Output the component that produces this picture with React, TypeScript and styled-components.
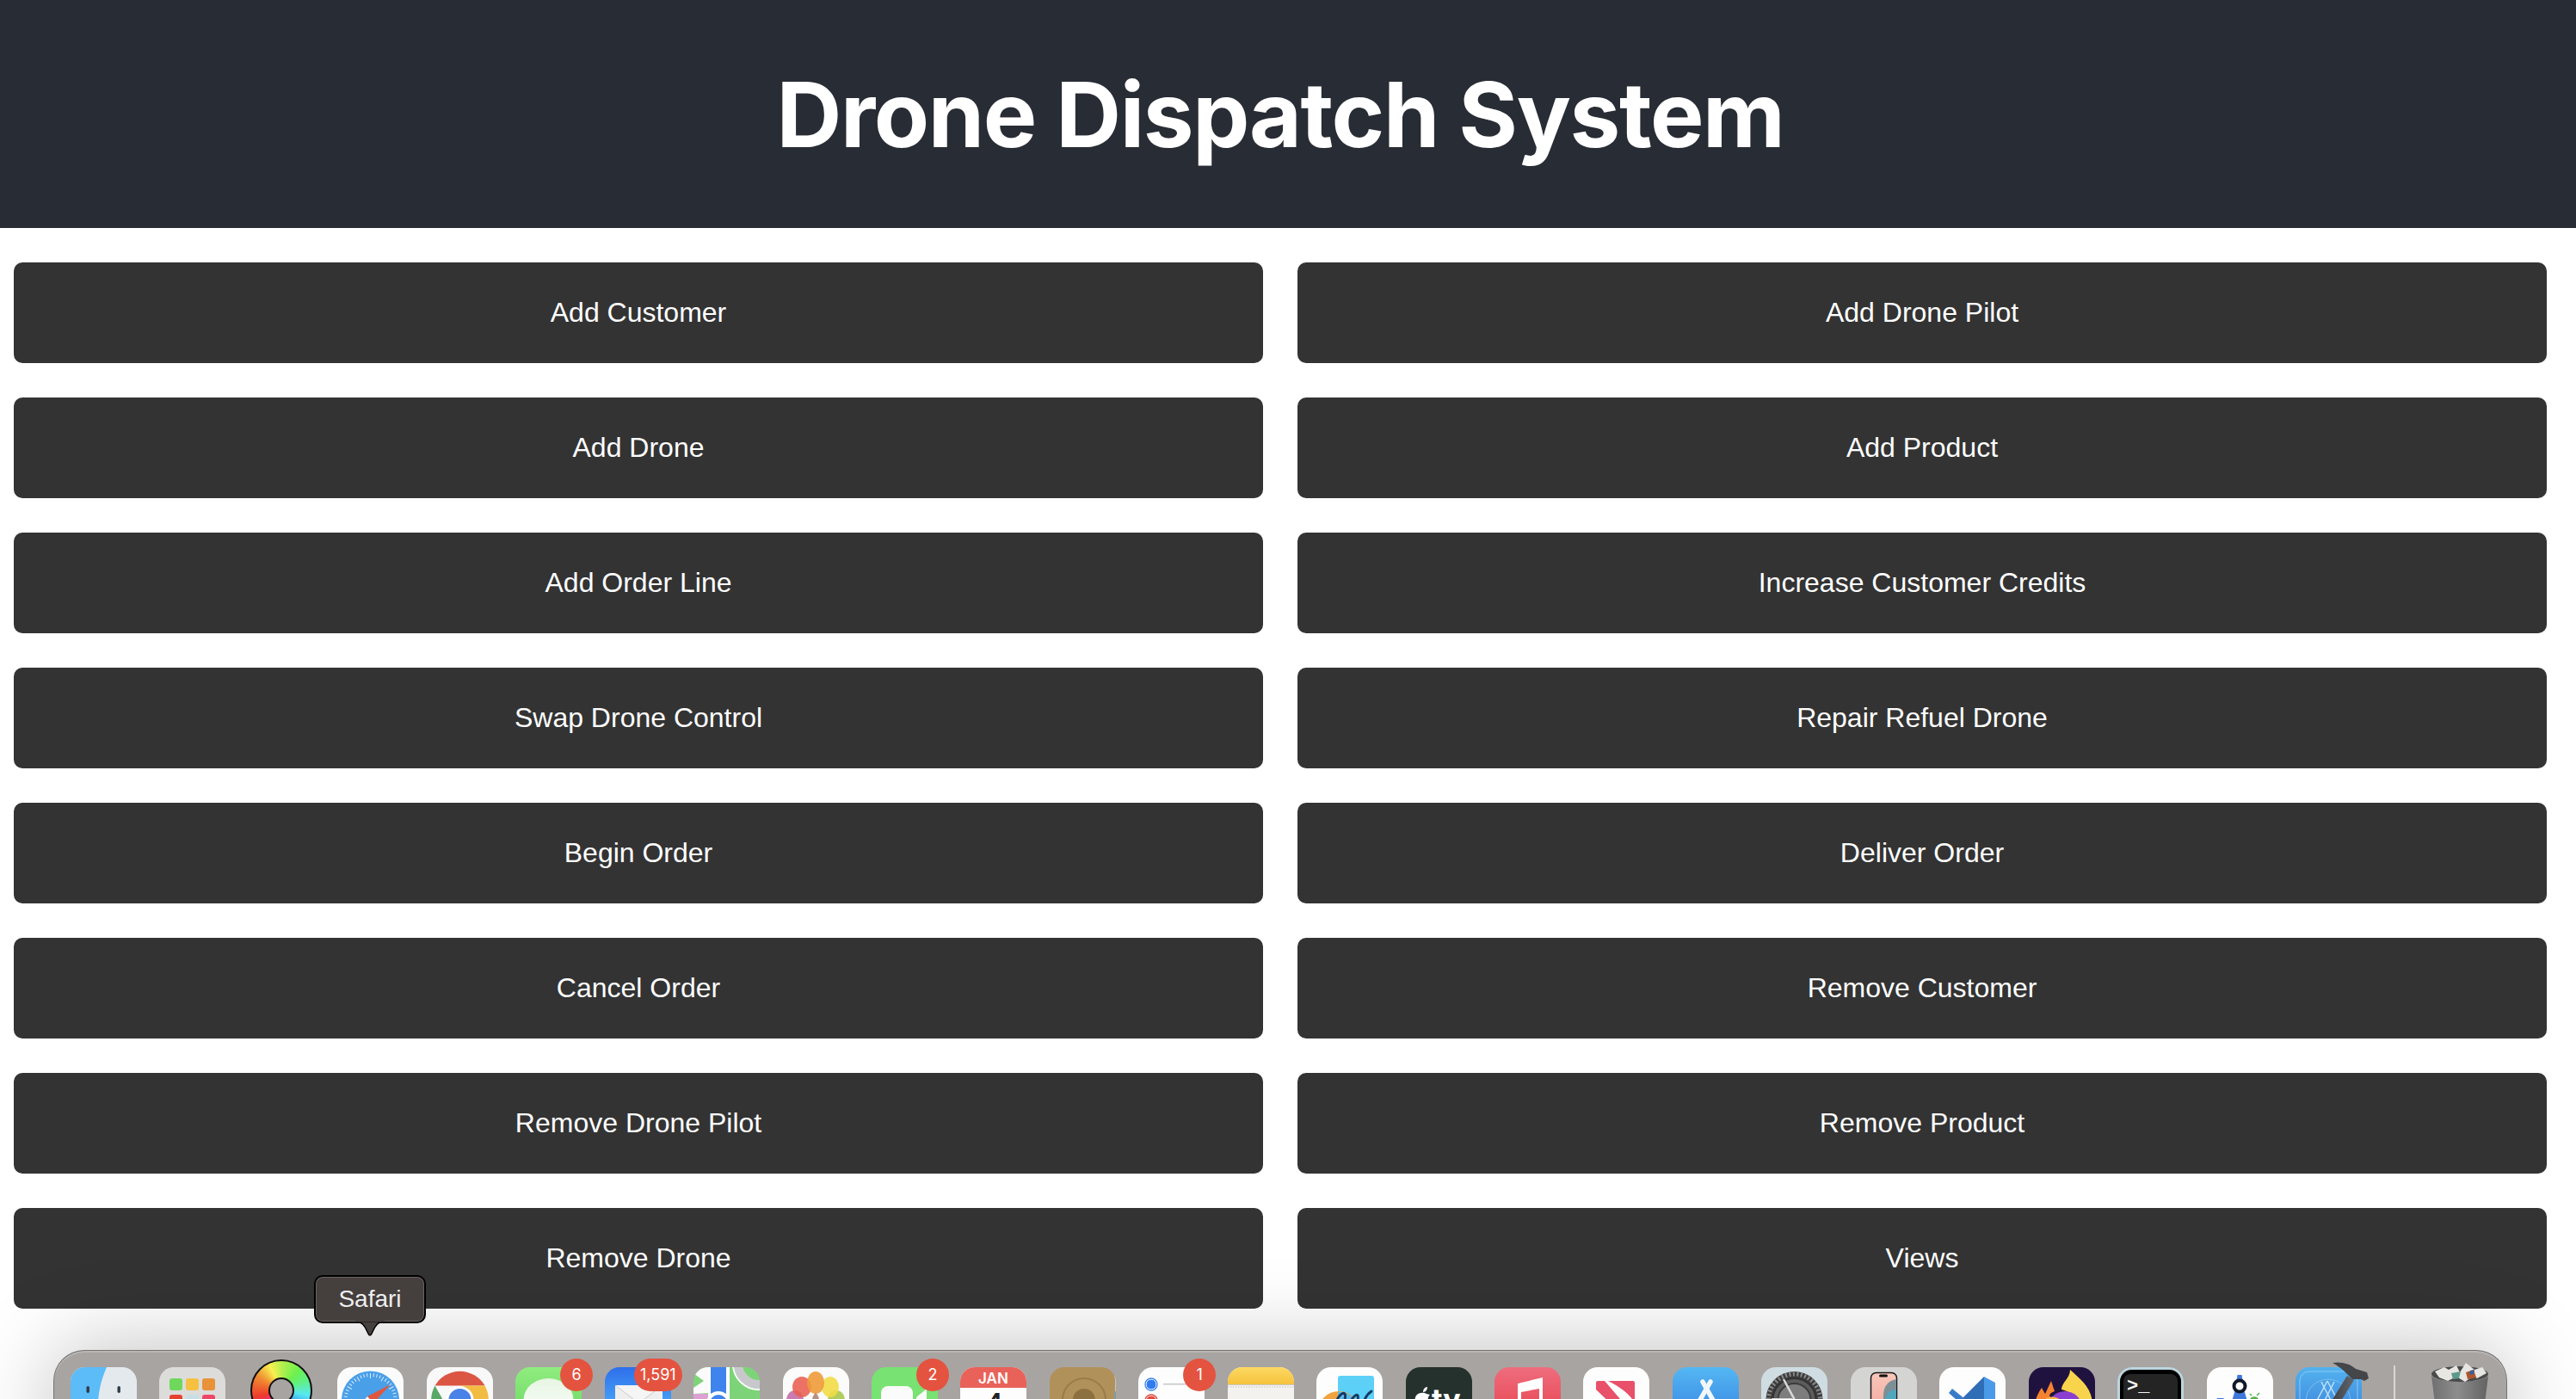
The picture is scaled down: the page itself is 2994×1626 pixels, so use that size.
import React from 'react';
import styled, { createGlobalStyle } from 'styled-components';

const GlobalStyle = createGlobalStyle`
  html, body {
    margin: 0;
    padding: 0;
    background: #fff;
    overflow: hidden;
  }
`;

const Page = styled.div`
  position: relative;
  height: 1626px;
  overflow: hidden;
  font-family: 'Liberation Sans', Arial, sans-serif;
`;

const Header = styled.header`
  height: 265px;
  padding-right: 18px;
  background-color: #282c34;
  display: flex;
  align-items: center;
  justify-content: center;
`;

const Title = styled.h1`
  margin: 0;
  color: #fff;
  font-family: Inter, 'Liberation Sans', sans-serif;
  font-size: 105px;
  font-weight: 700;
  letter-spacing: -1.4px;
`;

const ActionGrid = styled.div`
  display: grid;
  grid-template-columns: 1fr 1fr;
  gap: 40px;
  padding: 40px 34px 0 16px;
`;

const ActionButton = styled.button`
  height: 117px;
  border: none;
  border-radius: 10px;
  background-color: #333333;
  color: #fff;
  font-family: inherit;
  font-size: 32px;
  font-weight: 400;
`;

const Dock = styled.div`
  position: absolute;
  left: 62px;
  top: 1569px;
  width: 2852px;
  height: 140px;
  box-sizing: border-box;
  padding: 19px 0 0 19px;
  display: flex;
  gap: 26.44px;
  background-color: #a8a4a2;
  border: 1.5px solid #757372;
  border-bottom: none;
  border-radius: 36px;
  box-shadow: inset 0 2px 0 #b9b6b4, 0 0 100px rgba(0, 0, 0, 0.26);
`;

const Slot = styled.div`
  position: relative;
  flex: none;
  width: 77px;
  height: 77px;
`;

const Tile = styled.div`
  width: 77px;
  height: 77px;
  border-radius: 17px;
  overflow: hidden;
`;

const Glyph = styled.svg`
  display: block;
  width: 77px;
  height: 77px;
`;

const XcodeGlyph = styled.svg`
  display: block;
  width: 77px;
  height: 77px;
  overflow: visible;
`;

const TrashGlyph = styled.svg`
  display: block;
  width: 77px;
  height: 77px;
  margin-top: -3px;
  overflow: visible;
`;

const Wheel = styled.div`
  width: 72px;
  height: 72px;
  margin: -9px 0 0 2px;
  border-radius: 50%;
  box-sizing: border-box;
  border: 2px solid #111;
  display: flex;
  align-items: center;
  justify-content: center;
  background: conic-gradient(
    #b8f04e 0deg,
    #6cf04e 40deg,
    #60f08a 70deg,
    #58e8f0 100deg,
    #2f86f0 140deg,
    #8a3af0 190deg,
    #ee2f8a 225deg,
    #ee3a2c 255deg,
    #f08a30 300deg,
    #f8f050 335deg,
    #b8f04e 360deg
  );
`;

const WheelHole = styled.div`
  width: 26px;
  height: 26px;
  border-radius: 50%;
  border: 2px solid #111;
  background-color: #a8a4a2;
`;

const Badge = styled.span<{ $wide: boolean }>`
  position: absolute;
  top: -10px;
  right: -13px;
  min-width: 38px;
  height: 38px;
  padding: ${(p) => (p.$wide ? '0 7px' : '0')};
  box-sizing: border-box;
  border-radius: 19px;
  background-color: #e4533f;
  color: #fff;
  font-family: Inter, 'Liberation Sans', sans-serif;
  font-size: 18px;
  line-height: 38px;
  text-align: center;
`;

const Separator = styled.div`
  flex: none;
  width: 2px;
  height: 120px;
  margin: -2px 10px 0 11px;
  background-color: #d8d6d5;
`;

const Tooltip = styled.div`
  position: absolute;
  left: 365px;
  top: 1482px;
  width: 130px;
  height: 56px;
  box-sizing: border-box;
  border: 2px solid #000;
  border-radius: 10px;
  background-color: #453f3e;
  box-shadow: inset 0 0 0 1px #6a6564;
  color: #eeeeee;
  font-size: 28px;
  line-height: 52px;
  text-align: center;
  z-index: 2;
`;

const TooltipArrow = styled.svg`
  position: absolute;
  left: 45px;
  top: 52px;
  width: 36px;
  height: 18px;
  overflow: visible;
`;

const CalendarMonth = styled.text`
  fill: #fff;
  font-size: 17px;
  font-weight: 600;
  font-family: Inter, 'Liberation Sans', sans-serif;
`;

const CalendarDay = styled.text`
  fill: #222;
  font-size: 42px;
  font-weight: 400;
  font-family: Inter, 'Liberation Sans', sans-serif;
`;

const TvLabel = styled.text`
  fill: #fff;
  font-size: 34px;
  font-weight: 700;
  font-family: Inter, 'Liberation Sans', sans-serif;
`;

const TerminalPrompt = styled.text`
  fill: #f4f4f4;
  font-size: 22px;
  font-weight: 700;
  font-family: 'Liberation Mono', monospace;
`;

const actions = [
  'Add Customer',
  'Add Drone Pilot',
  'Add Drone',
  'Add Product',
  'Add Order Line',
  'Increase Customer Credits',
  'Swap Drone Control',
  'Repair Refuel Drone',
  'Begin Order',
  'Deliver Order',
  'Cancel Order',
  'Remove Customer',
  'Remove Drone Pilot',
  'Remove Product',
  'Remove Drone',
  'Views',
];

const Icon: React.FC<{ children: React.ReactNode }> = ({ children }) => (
  <Glyph viewBox="0 0 77 77">{children}</Glyph>
);

const safariTicks = Array.from({ length: 48 }, (_, i) => (i * 360) / 48);

const apps: { name: string; badge?: string; icon: React.ReactNode }[] = [
  {
    name: 'Finder',
    icon: (
      <Icon>
        <rect width="77" height="77" fill="#e4e9ee" />
        <path d="M0 0H42C36 14 33 26 32 40V77H0Z" fill="#5bbcf8" />
        <rect x="18.5" y="22" width="3.4" height="8" rx="1.7" fill="#2f3a44" />
        <rect x="54.5" y="22" width="3.4" height="8" rx="1.7" fill="#2f3a44" />
      </Icon>
    ),
  },
  {
    name: 'Launchpad',
    icon: (
      <Icon>
        <rect width="77" height="77" fill="#dcdcdb" />
        <rect x="12" y="13" width="15" height="14" rx="3" fill="#6fd85c" />
        <rect x="31" y="13" width="15" height="14" rx="3" fill="#f6c140" />
        <rect x="50" y="13" width="15" height="14" rx="3" fill="#e8923a" />
        <rect x="12" y="32" width="15" height="14" rx="3" fill="#e5412f" />
        <rect x="31" y="32" width="15" height="14" rx="3" fill="#c9dde4" />
        <rect x="50" y="32" width="15" height="14" rx="3" fill="#ee4767" />
      </Icon>
    ),
  },
  { name: 'Color Wheel', icon: null },
  {
    name: 'Safari',
    icon: (
      <Icon>
        <rect width="77" height="77" fill="#fbfbfb" />
        <circle cx="38.5" cy="38" r="33.5" fill="#4a9fe9" />
        {safariTicks.map((deg) => (
          <rect
            key={deg}
            x="38"
            y="7"
            width="1"
            height={deg % 30 === 0 ? 6 : 4}
            fill="#dcecf9"
            transform={`rotate(${deg} 38.5 38)`}
          />
        ))}
        <path d="M62 20L42 42L35 34Z" fill="#e0573f" />
        <path d="M15 56L35 34L42 42Z" fill="#f2f2f2" />
      </Icon>
    ),
  },
  {
    name: 'Chrome',
    icon: (
      <Icon>
        <rect width="77" height="77" fill="#f8f8f8" />
        <path d="M9.5 21.5A33.5 33.5 0 0 1 67.5 21.5H38.5Z" fill="#db5643" />
        <path d="M9.5 21.5L24 47L38.5 71.5A33.5 33.5 0 0 1 9.5 21.5Z" fill="#5aa867" />
        <path d="M67.5 21.5A33.5 33.5 0 0 1 38.5 71.5L53 47L38.5 21.5Z" fill="#f2bc42" />
        <circle cx="38.5" cy="38" r="16" fill="#fff" />
        <circle cx="38.5" cy="38" r="13" fill="#4b82e8" />
      </Icon>
    ),
  },
  {
    name: 'Messages',
    badge: '6',
    icon: (
      <Icon>
        <defs>
          <linearGradient id="msg" x1="0" y1="0" x2="0" y2="1">
            <stop offset="0" stopColor="#90ec80" />
            <stop offset="1" stopColor="#5fd35a" />
          </linearGradient>
          <linearGradient id="bubble" x1="0" y1="0" x2="0" y2="1">
            <stop offset="0" stopColor="#e6f5e2" />
            <stop offset="1" stopColor="#fff" />
          </linearGradient>
        </defs>
        <rect width="77" height="77" fill="url(#msg)" />
        <ellipse cx="38.5" cy="38" rx="29" ry="25" fill="url(#bubble)" />
      </Icon>
    ),
  },
  {
    name: 'Mail',
    badge: '1,591',
    icon: (
      <Icon>
        <defs>
          <linearGradient id="mail" x1="0" y1="0" x2="0" y2="1">
            <stop offset="0" stopColor="#2e6fec" />
            <stop offset="0.6" stopColor="#48a6f6" />
          </linearGradient>
        </defs>
        <rect width="77" height="77" fill="url(#mail)" />
        <rect x="12" y="21" width="55" height="40" fill="#eeeeee" />
        <path d="M12 21L39.5 42L67 21" fill="#f5f5f5" stroke="#c9c9c9" strokeWidth="1" />
      </Icon>
    ),
  },
  {
    name: 'Maps',
    icon: (
      <Icon>
        <rect width="77" height="77" fill="#7dd478" />
        <path d="M0 0H18V30L0 31V24L12 16L0 7Z" fill="#fbfbfb" />
        <path d="M0 31H20V77H0Z" fill="#dca0d2" />
        <rect x="17" width="25" height="77" fill="#fff" />
        <rect x="20" width="18" height="77" fill="#3f83ec" />
        <circle cx="76" cy="-4" r="30" fill="none" stroke="#fff" strokeWidth="2" />
        <circle cx="76" cy="-4" r="24" fill="#7dd478" stroke="#c8c8cc" strokeWidth="10" />
        <circle cx="29" cy="42" r="14" fill="#fff" />
        <circle cx="29" cy="42" r="10" fill="#3f83ec" />
      </Icon>
    ),
  },
  {
    name: 'Photos',
    icon: (
      <Icon>
        <rect width="77" height="77" fill="#fbfbfb" />
        <ellipse cx="14" cy="38" rx="10" ry="11" fill="#c46ea8" opacity=".9" />
        <ellipse cx="62" cy="38" rx="10" ry="11" fill="#a9c84e" opacity=".9" />
        <ellipse cx="22" cy="23" rx="11" ry="12" fill="#e85f50" opacity=".88" />
        <ellipse cx="55" cy="23" rx="10" ry="12" fill="#f2dc46" opacity=".9" />
        <ellipse cx="38" cy="18" rx="10" ry="13" fill="#ee9b3a" opacity=".9" />
        <path d="M38 30C34 34 32 37 38 46C44 37 42 34 38 30Z" fill="#8a4a2e" opacity=".6" />
      </Icon>
    ),
  },
  {
    name: 'FaceTime',
    badge: '2',
    icon: (
      <Icon>
        <rect width="77" height="77" fill="#78e272" />
        <rect x="11" y="22" width="37" height="34" rx="8" fill="#fbfbfb" />
        <path d="M52 35L64 25V56L52 46Z" fill="#fbfbfb" />
      </Icon>
    ),
  },
  {
    name: 'Calendar',
    icon: (
      <Icon>
        <rect width="77" height="77" fill="#fdfdfd" />
        <rect width="77" height="24" fill="#e9625a" />
        <CalendarMonth x="38.5" y="19" textAnchor="middle">JAN</CalendarMonth>
        <CalendarDay x="38.5" y="61" textAnchor="middle">4</CalendarDay>
      </Icon>
    ),
  },
  {
    name: 'Contacts',
    icon: (
      <Icon>
        <rect x="70" y="10" width="7" height="30" fill="#c9c7c2" />
        <rect x="70" y="28" width="7" height="49" fill="#55a4e4" />
        <rect width="76" height="77" rx="15" fill="#b1915a" />
        <circle cx="40" cy="38" r="25" fill="none" stroke="#9a7b49" strokeWidth="2" />
        <circle cx="40" cy="38" r="13" fill="#8d7040" />
      </Icon>
    ),
  },
  {
    name: 'Reminders',
    badge: '1',
    icon: (
      <Icon>
        <rect width="77" height="77" fill="#fdfdfd" />
        <circle cx="15" cy="20" r="6" fill="#2f7bf0" stroke="#fff" strokeWidth="1" />
        <circle cx="15" cy="20" r="7" fill="none" stroke="#3e86f0" strokeWidth="1.4" />
        <rect x="29" y="19" width="30" height="1.4" fill="#c4c4c4" />
        <circle cx="15" cy="39" r="6" fill="#e24a3c" stroke="#fff" strokeWidth="1" />
        <circle cx="15" cy="39" r="7" fill="none" stroke="#e24a3c" strokeWidth="1.4" />
        <rect x="29" y="38" width="30" height="1.4" fill="#c4c4c4" />
      </Icon>
    ),
  },
  {
    name: 'Notes',
    icon: (
      <Icon>
        <defs>
          <linearGradient id="notes" x1="0" y1="0" x2="0" y2="1">
            <stop offset="0" stopColor="#fcd962" />
            <stop offset="1" stopColor="#f6c23d" />
          </linearGradient>
        </defs>
        <rect width="77" height="77" fill="#f3f2ee" />
        <rect width="77" height="20" fill="url(#notes)" />
        <rect y="20" width="77" height="1" fill="#c9c7c0" />
        <line x1="0" x2="77" y1="23" y2="23" stroke="#c5c3bd" strokeWidth="1" strokeDasharray="1.5 1.5" />
      </Icon>
    ),
  },
  {
    name: 'Freeform',
    icon: (
      <Icon>
        <rect width="77" height="77" fill="#fdfdfd" />
        <rect x="25" y="10" width="42" height="46" rx="3" fill="#5dd0f8" />
        <circle cx="26" cy="52" r="24" fill="#f0a33e" />
        <path d="M30 29A23 23 0 0 1 49 50H25V29Z" fill="#58b8e6" />
        <path d="M20 52C22 36 30 28 33 31C36 35 28 50 29 52M37 52C38 38 46 30 48 33C50 37 44 48 46 52M56 38C58 33 61 30 64 28" fill="none" stroke="#173a63" strokeWidth="3" strokeLinecap="round" />
      </Icon>
    ),
  },
  {
    name: 'TV',
    icon: (
      <Icon>
        <rect width="77" height="77" fill="#25312d" />
        <path d="M24 31C21 29 15 29 12 33C9 37 11 45 15 49H29C25 44 24 36 28 32C27 31.8 25 31 24 31ZM25 23C22 23 20 26 20 29C23 29 25 26 25 23Z" fill="#fff" />
        <TvLabel x="30" y="50">tv</TvLabel>
      </Icon>
    ),
  },
  {
    name: 'Music',
    icon: (
      <Icon>
        <defs>
          <linearGradient id="music" x1="0" y1="0" x2="0" y2="1">
            <stop offset="0" stopColor="#ee6d7e" />
            <stop offset="0.6" stopColor="#ea4d5a" />
          </linearGradient>
        </defs>
        <rect width="77" height="77" fill="url(#music)" />
        <path d="M27 19L56 12V58H52V25L31 29V66H27Z" fill="#fff" />
      </Icon>
    ),
  },
  {
    name: 'News',
    icon: (
      <Icon>
        <rect width="77" height="77" fill="#fdfdfd" />
        <path d="M29 16H58Q60 16 60 18V37L57 37C50 28 41 22 29 16Z" fill="#e9506a" />
        <path d="M17 16H25L43 37L52 50H40L15 26V18Q15 16 17 16Z" fill="#e9506a" />
      </Icon>
    ),
  },
  {
    name: 'App Store',
    icon: (
      <Icon>
        <defs>
          <linearGradient id="store" x1="0" y1="0" x2="0" y2="1">
            <stop offset="0" stopColor="#54b7f3" />
            <stop offset="0.7" stopColor="#3c8ae3" />
          </linearGradient>
        </defs>
        <rect width="77" height="77" fill="url(#store)" />
        <g stroke="#f2f7fc" strokeWidth="5.5" strokeLinecap="round">
          <line x1="35" y1="17" x2="49" y2="42" />
          <line x1="44" y1="17" x2="28" y2="45" />
        </g>
      </Icon>
    ),
  },
  {
    name: 'Settings',
    icon: (
      <Icon>
        <rect width="77" height="77" fill="#cfdde2" />
        <circle cx="38.5" cy="38" r="33" fill="#3c3c3c" />
        <circle cx="38.5" cy="38" r="30" fill="none" stroke="#8a8a8a" strokeWidth="5" strokeDasharray="2 2.5" />
        <circle cx="38.5" cy="38" r="25" fill="#5c5c5c" stroke="#333" strokeWidth="2" />
        <circle cx="38.5" cy="38" r="19" fill="#7d7d7d" stroke="#3c3c3c" strokeWidth="2" />
        <line x1="26" y1="14" x2="40" y2="40" stroke="#d9d9d9" strokeWidth="2.5" />
        <line x1="12" y1="37" x2="36" y2="37" stroke="#d0d0d0" strokeWidth="2" />
      </Icon>
    ),
  },
  {
    name: 'iPhone Mirroring',
    icon: (
      <Icon>
        <defs>
          <linearGradient id="phone" x1="0" y1="0" x2="0" y2="1">
            <stop offset="0" stopColor="#f8c7ba" />
            <stop offset="1" stopColor="#f19a90" />
          </linearGradient>
        </defs>
        <rect width="77" height="77" fill="#d4d5d3" />
        <rect x="23.5" y="6.5" width="30" height="66" rx="6" fill="url(#phone)" stroke="#1a1a1a" strokeWidth="1.5" />
        <path d="M53 14C42 16 38 24 38 33V72H47C51 72 53 69 53 66Z" fill="#7d8f96" />
        <path d="M53 26C46 26 41 31 39 40V72H47C51 72 53 69 53 66Z" fill="#4fa6bd" />
        <rect x="33" y="8.5" width="10" height="3" rx="1.5" fill="#111" />
      </Icon>
    ),
  },
  {
    name: 'Visual Studio Code',
    icon: (
      <Icon>
        <rect width="77" height="77" fill="#fdfdfd" />
        <path d="M52 11L65 18V72L52 77Z" fill="#4b9ae9" />
        <path d="M52 11V37L35 50L27 36Z" fill="#2f6db6" />
        <path d="M11 30L15 25L36 42L30 47Z" fill="#3a7cc9" />
      </Icon>
    ),
  },
  {
    name: 'Firefox',
    icon: (
      <Icon>
        <rect width="77" height="77" fill="#20123f" />
        <path d="M48 3C48 13 38 18 38 26C50 28 62 40 62 77H74V44C74 24 60 14 48 3Z" fill="#f7d44c" />
        <circle cx="42" cy="48" r="20" fill="#8b3fd0" />
        <path d="M5 60C5 44 9 32 15 24L19 31L26 16L30 28C24 30 22 34 27 36C34 36 38 38 40 42C28 40 22 46 22 77H8C6 72 5 66 5 60Z" fill="#f5822f" />
        <path d="M20 36C30 32 36 36 40 42C32 40 26 42 22 48Z" fill="#fbb148" />
      </Icon>
    ),
  },
  {
    name: 'Terminal',
    icon: (
      <Icon>
        <rect x="1.5" y="1.5" width="74" height="77" rx="15" fill="#000" stroke="#bcd5dd" strokeWidth="3" />
        <rect x="7" y="8" width="63" height="69" rx="8" fill="#242424" />
        <TerminalPrompt x="11" y="28">{'>_'}</TerminalPrompt>
      </Icon>
    ),
  },
  {
    name: 'Android Studio',
    icon: (
      <Icon>
        <rect width="77" height="77" fill="#fdfdfd" />
        <path d="M35.5 9H40.5L42 18H34Z" fill="#3f78dc" />
        <path d="M33 26L20 70H30L38 40L46 70H56L43 26Z" fill="#3f78dc" />
        <path d="M12 36L20 36L14 46H6Z" fill="#3f78dc" />
        <circle cx="38" cy="22" r="6.5" fill="#fff" stroke="#111827" strokeWidth="4" />
        <path d="M50 38C50 33 60 33 60 38Z" fill="#55b050" />
        <line x1="52" y1="33" x2="50" y2="31" stroke="#55b050" strokeWidth="1.5" />
        <line x1="58" y1="33" x2="61" y2="30" stroke="#55b050" strokeWidth="1.5" />
      </Icon>
    ),
  },
  {
    name: 'Xcode',
    icon: (
      <XcodeGlyph viewBox="0 0 77 77">
        <defs>
          <linearGradient id="xcode" x1="0" y1="0" x2="0" y2="1">
            <stop offset="0" stopColor="#53b3ef" />
            <stop offset="0.7" stopColor="#3d85dc" />
          </linearGradient>
          <linearGradient id="hammer" x1="0" y1="0" x2="1" y2="0">
            <stop offset="0" stopColor="#3a3c40" />
            <stop offset="1" stopColor="#62666c" />
          </linearGradient>
        </defs>
        <rect width="77" height="77" rx="16" fill="url(#xcode)" />
        <rect x="5" y="5" width="67" height="67" rx="11" fill="none" stroke="#8cc8f2" strokeWidth="1" />
        <circle cx="38" cy="40" r="26" fill="none" stroke="#7dbdee" strokeWidth="1" />
        <g stroke="#bfe0f7" strokeWidth="1.5" fill="none">
          <path d="M30 17L48 52M37 16L53 46" />
          <path d="M45 17L28 50M37 16L21 46" />
        </g>
        <path d="M60 10L68 15L50 44H39Z" fill="url(#hammer)" />
        <path d="M43 -5C52 -7 64 -4 70 2L83 6L85 13L80 16L76 14L66 14L58 6C54 2 49 -2 43 -5Z" fill="#44464a" />
      </XcodeGlyph>
    ),
  },
];

const App: React.FC = () => (
  <Page>
    <GlobalStyle />
    <Header>
      <Title>Drone Dispatch System</Title>
    </Header>
    <ActionGrid>
      {actions.map((label) => (
        <ActionButton key={label}>{label}</ActionButton>
      ))}
    </ActionGrid>

    <Tooltip>
      Safari
      <TooltipArrow viewBox="0 0 36 18">
        <path d="M1 0C7 0 10 2 12.5 7L16.5 15C17.2 16.4 18.8 16.4 19.5 15L23.5 7C26 2 29 0 35 0Z" fill="#453f3e" stroke="#000" strokeWidth="1.5" />
        <rect x="1" y="-2" width="34" height="2.5" fill="#453f3e" />
      </TooltipArrow>
    </Tooltip>

    <Dock>
      {apps.map((app) => (
        <Slot key={app.name}>
          {app.name === 'Color Wheel' ? (
            <Wheel>
              <WheelHole />
            </Wheel>
          ) : app.name === 'Xcode' ? (
            app.icon
          ) : (
            <Tile>{app.icon}</Tile>
          )}
          {app.badge && <Badge $wide={app.badge.length > 1}>{app.badge}</Badge>}
        </Slot>
      ))}
      <Separator />
      <Slot>
        <TrashGlyph viewBox="0 0 77 77">
          <defs>
            <linearGradient id="bin" x1="0" y1="0" x2="1" y2="0">
              <stop offset="0" stopColor="#6f6f70" />
              <stop offset="0.45" stopColor="#8d8d8e" />
              <stop offset="1" stopColor="#626263" />
            </linearGradient>
          </defs>
          <path d="M5 13C10 22 66 22 71 13L63 77H13Z" fill="url(#bin)" />
          <ellipse cx="38" cy="11" rx="33" ry="9" fill="#4a4a4b" />
          <path d="M9 8L20 3L25 6L34 1L38 9L45 -2L55 6L64 3L69 10L58 16L54 13L44 20L34 14L24 19L14 15Z" fill="#e8e6e2" />
          <path d="M28 10L39 8L37 16L30 17Z" fill="#5a9a8a" />
          <path d="M45 9L54 6L57 15L47 17Z" fill="#b0562c" />
          <path d="M50 7L55 6L54 11L49 12Z" fill="#3a5f9d" />
        </TrashGlyph>
      </Slot>
    </Dock>
  </Page>
);

export default App;
